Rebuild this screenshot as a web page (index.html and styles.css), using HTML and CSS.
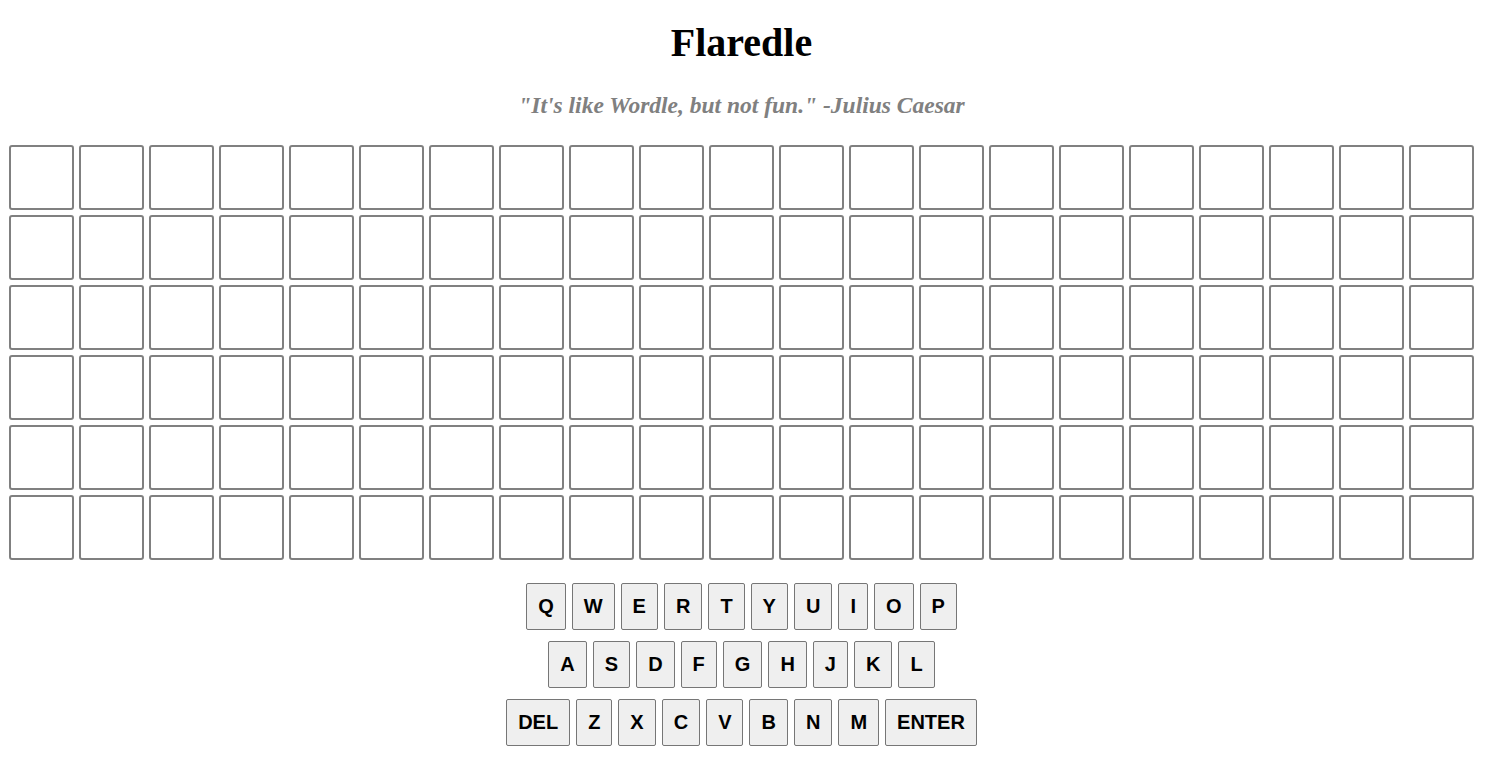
FILE: index.html
```html
<!DOCTYPE html>
<html>
<head>
<meta charset="utf-8">
<title>Flaredle</title>
<link rel="stylesheet" href="styles.css">
</head>
<body>
<div class="page">
  <h1 class="title">Flaredle</h1>
  <p class="tagline">"It's like Wordle, but not fun." -Julius Caesar</p>
  <div class="board" id="board"></div>
  <div class="keyboard">
    <div class="krow">
      <button class="key">Q</button><button class="key">W</button><button class="key">E</button><button class="key">R</button><button class="key">T</button><button class="key">Y</button><button class="key">U</button><button class="key">I</button><button class="key">O</button><button class="key">P</button>
    </div>
    <div class="krow">
      <button class="key">A</button><button class="key">S</button><button class="key">D</button><button class="key">F</button><button class="key">G</button><button class="key">H</button><button class="key">J</button><button class="key">K</button><button class="key">L</button>
    </div>
    <div class="krow">
      <button class="key">DEL</button><button class="key">Z</button><button class="key">X</button><button class="key">C</button><button class="key">V</button><button class="key">B</button><button class="key">N</button><button class="key">M</button><button class="key">ENTER</button>
    </div>
  </div>
</div>
<script src="app.js"></script>
</body>
</html>
```
FILE: app.js
```js
const board = document.getElementById('board');
for (let r = 0; r < 6; r++) {
  const row = document.createElement('div');
  row.className = 'brow';
  for (let c = 0; c < 21; c++) {
    const t = document.createElement('div');
    t.className = 'tile';
    row.appendChild(t);
  }
  board.appendChild(row);
}
```
FILE: styles.css
```css
html, body {
  margin: 0;
  padding: 0;
  background: #fff;
}
.page {
  padding-right: 3px;
  display: flex;
  flex-direction: column;
  align-items: center;
  font-family: "Liberation Serif", "Times New Roman", serif;
}
.title {
  margin: 20px 0 0;
  font-size: 40px;
  line-height: 46px;
  font-weight: bold;
  color: #000;
}
.tagline {
  margin: 26px 0 0;
  font-size: 23.5px;
  line-height: 26px;
  font-weight: bold;
  font-style: italic;
  color: #808080;
}
.board {
  margin-top: 27px;
  display: flex;
  flex-direction: column;
  gap: 5px;
}
.brow {
  display: flex;
  gap: 5px;
}
.tile {
  width: 65px;
  height: 65px;
  box-sizing: border-box;
  border: 2px solid #808080;
  border-radius: 3px;
}
.keyboard {
  margin-top: 23px;
  display: flex;
  flex-direction: column;
  align-items: center;
  gap: 11px;
}
.krow {
  display: flex;
  gap: 6px;
}
.key {
  height: 47px;
  box-sizing: border-box;
  padding: 0 11px;
  margin: 0;
  border: 1px solid #767676;
  border-radius: 2px;
  background: #efefef;
  font-family: "Liberation Sans", Arial, sans-serif;
  font-size: 20px;
  font-weight: bold;
  color: #000;
}
```
